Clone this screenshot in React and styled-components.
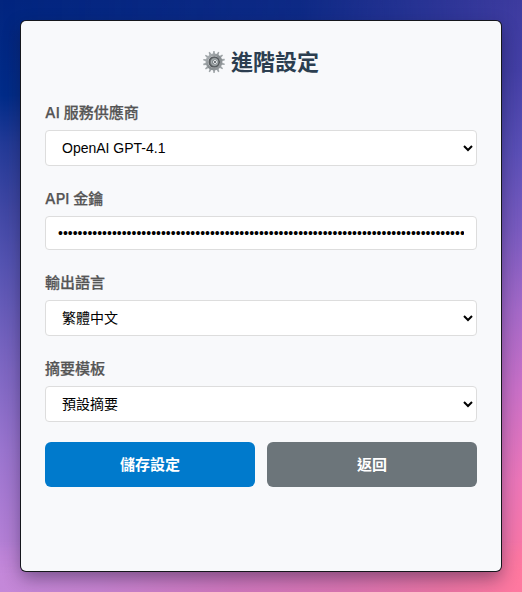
import React, { useState } from "react";
import styled, { createGlobalStyle } from "styled-components";

const GlobalStyle = createGlobalStyle`
  * { box-sizing: border-box; }
  body { margin: 0; }
`;

const Desktop = styled.main`
  position: relative;
  isolation: isolate;
  width: 522px;
  height: 592px;
  padding: 21px;
  overflow: hidden;
  background: linear-gradient(180deg, #02257f 0, #012c89 95px, #243b98 145px, #4148a5 210px, #5353b1 260px, #7764c0 350px, #9a75cf 450px, #c185d9 592px);
  font-family: Inter, "Noto Sans CJK TC", sans-serif;

  &::before,
  &::after {
    content: "";
    position: absolute;
    inset: 0;
    z-index: -1;
  }

  &::before {
    background: linear-gradient(180deg, #3d3b9f 0, #443fa5 70px, #5a4fb6 150px, #7a5bc0 230px, #a569c8 310px, #ca70c7 390px, #ec76b8 480px, #ff769c 592px);
    mask-image: linear-gradient(90deg, transparent 0, rgba(0, 0, 0, 0.2) 300px, #000 520px);
  }

  &::after {
    background: linear-gradient(90deg, #c488d9 0, #c783d0 100px, #d078be 230px, #da75b2 340px, #ea74a4 440px, #ff789f 522px);
    mask-image: linear-gradient(180deg, transparent 540px, #000 575px);
  }
`;

const Panel = styled.section`
  width: 480px;
  height: 550px;
  padding: 25px 24px;
  border-radius: 5px;
  background: #f8f9fb;
  box-shadow: 0 0 0 1px #15171c, 0 7px 18px rgba(25, 20, 50, 0.45);
`;

const Title = styled.h1`
  display: flex;
  align-items: center;
  justify-content: center;
  gap: 5px;
  height: 32px;
  margin: 0 0 24px;
  padding-right: 1px;
  color: #2c3e50;
  font-size: 22px;
  font-weight: 700;
  line-height: 32px;
`;

const Form = styled.form`
  display: flex;
  flex-direction: column;
  gap: 20px;
`;

const Fields = styled.div`
  display: flex;
  flex-direction: column;
  gap: 22px;
`;

const Field = styled.div`
  display: flex;
  flex-direction: column;
  gap: 6px;
`;

const Label = styled.label`
  height: 22px;
  color: #555;
  font-size: 15px;
  font-weight: 500;
  line-height: 22px;
  -webkit-text-stroke: 0.25px #555;
`;

const Select = styled.select`
  width: 100%;
  height: 36px;
  padding: 0 12px;
  border: 1px solid #ddd;
  border-radius: 4px;
  background: #fff;
  color: #000;
  font: 14px "Liberation Sans", "Noto Sans CJK TC", sans-serif;
`;

const SecretInput = styled.input`
  width: 100%;
  height: 34px;
  padding: 0 12px;
  border: 1px solid #ddd;
  border-radius: 4px;
  background: #fff;
  color: #000;
  font: 14px "Liberation Sans", sans-serif;
`;

const Actions = styled.div`
  display: grid;
  grid-template-columns: 1fr 1fr;
  gap: 12px;
`;

const Button = styled.button`
  height: 45px;
  padding: 0 0 3px;
  border: 0;
  border-radius: 6px;
  background: ${({ $primary }) => ($primary ? "#007acc" : "#6c757a")};
  color: #fff;
  font: 700 15px "Noto Sans CJK TC", sans-serif;
`;

const teeth = Array.from({ length: 14 }, (_, i) => (i * 360) / 14);

function Gear() {
  return (
    <svg width="24" height="24" viewBox="0 0 24 24" aria-hidden="true">
      <defs>
        <linearGradient id="metal" x1="0" y1="0" x2="1" y2="1">
          <stop offset="0" stopColor="#b0b5b8" />
          <stop offset=".5" stopColor="#858b8e" />
          <stop offset="1" stopColor="#969b9e" />
        </linearGradient>
      </defs>
      {teeth.map((angle) => (
        <path key={angle} d="M10.7 4.5 11.3 1h1.3l.6 3.5z" fill="#a0a6a9" transform={`rotate(${angle} 12 12)`} />
      ))}
      <circle cx="12" cy="12" r="7.2" fill="none" stroke="url(#metal)" strokeWidth="2.4" />
      <circle cx="12.2" cy="12" r="5.1" fill="#74797c" stroke="#565b5e" strokeWidth="1.5" />
      <circle cx="12.6" cy="12" r="3.1" fill="#7b8285" stroke="#a4abad" strokeWidth="1.2" />
      <circle cx="13" cy="12" r="1.5" fill="#394146" stroke="#f3f5f6" strokeWidth="1" />
    </svg>
  );
}

function SelectField({ id, label, value }) {
  return (
    <Field>
      <Label htmlFor={id}>{label}</Label>
      <Select id={id} defaultValue={value}>
        <option>{value}</option>
      </Select>
    </Field>
  );
}

export default function App() {
  const [apiKey, setApiKey] = useState("x".repeat(83));
  return (
    <>
      <GlobalStyle />
      <Desktop>
        <Panel>
          <Title><Gear />進階設定</Title>
          <Form onSubmit={(event) => event.preventDefault()}>
            <Fields>
              <SelectField id="provider" label="AI 服務供應商" value="OpenAI GPT-4.1" />
              <Field>
                <Label htmlFor="api-key">API 金鑰</Label>
                <SecretInput id="api-key" type="password" value={apiKey} onChange={(event) => setApiKey(event.target.value)} />
              </Field>
              <SelectField id="language" label="輸出語言" value="繁體中文" />
              <SelectField id="template" label="摘要模板" value="預設摘要" />
            </Fields>
            <Actions>
              <Button $primary type="submit">儲存設定</Button>
              <Button type="button">返回</Button>
            </Actions>
          </Form>
        </Panel>
      </Desktop>
    </>
  );
}
